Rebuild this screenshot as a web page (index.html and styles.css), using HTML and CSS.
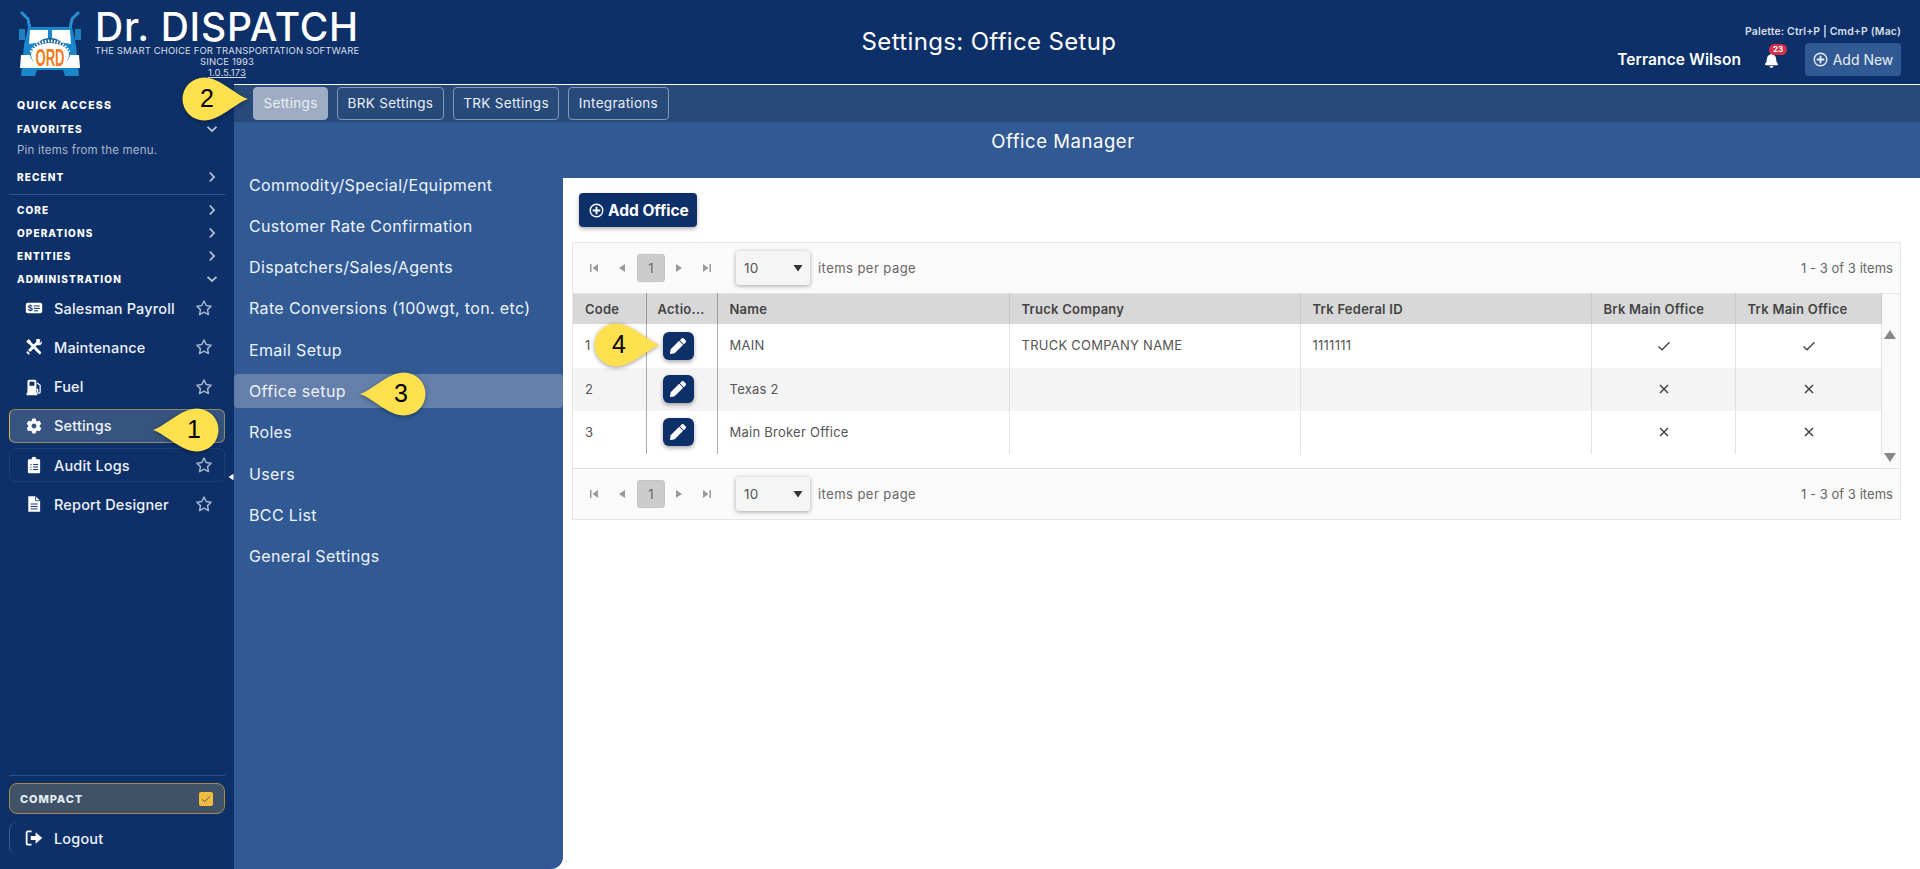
FILE: index.html
```html
<!DOCTYPE html>
<html lang="en">
<head>
<meta charset="utf-8">
<title>Settings: Office Setup</title>
<link rel="stylesheet" href="styles.css">
</head>
<body>
<svg class="defs" aria-hidden="true">
  <symbol id="i-star" viewBox="0 0 24 24"><path d="M12 2.6l2.9 6.1 6.6.9-4.8 4.6 1.2 6.6L12 17.6l-5.9 3.2 1.2-6.6L2.500 9.600l6.600-.9z" fill="none" stroke="currentColor" stroke-width="2" stroke-linejoin="round"/></symbol>
  <symbol id="i-down" viewBox="0 0 12 12"><path d="M1.500 3.800L6 8l4.500-4.200" fill="none" stroke="currentColor" stroke-width="1.800"/></symbol>
  <symbol id="i-right" viewBox="0 0 12 12"><path d="M3.800 1.500L8 6l-4.200 4.500" fill="none" stroke="currentColor" stroke-width="1.800"/></symbol>
  <symbol id="i-plus" viewBox="0 0 16 16"><circle cx="8" cy="8" r="6.700" fill="none" stroke="currentColor" stroke-width="1.500"/><path d="M8 4v8M4 8h8" stroke="currentColor" stroke-width="2"/></symbol>
  <symbol id="i-pen" viewBox="0 0 512 512"><path fill="currentColor" d="M497.900 142.100l-46.100 46.100c-4.700 4.700-12.300 4.700-17 0l-111-111c-4.700-4.700-4.700-12.300 0-17l46.100-46.100c18.700-18.700 49.100-18.700 67.900 0l60.100 60.100c18.800 18.700 18.800 49.100 0 67.900zM284.200 99.800L21.600 362.400.4 483.900c-2.900 16.400 11.400 30.600 27.800 27.800l121.500-21.300 262.600-262.600c4.700-4.700 4.700-12.300 0-17l-111-111c-4.800-4.700-12.400-4.700-17.100 0z"/></symbol>
  <symbol id="i-first" viewBox="0 0 12 12"><path fill="currentColor" d="M2 2h1.500v8H2zM10 2v8L4.500 6z"/></symbol>
  <symbol id="i-prev" viewBox="0 0 12 12"><path fill="currentColor" d="M9 2v8L3 6z"/></symbol>
  <symbol id="i-next" viewBox="0 0 12 12"><path fill="currentColor" d="M3 2v8l6-4z"/></symbol>
  <symbol id="i-last" viewBox="0 0 12 12"><path fill="currentColor" d="M10 2H8.500v8H10zM2 2v8l5.500-4z"/></symbol>
  <symbol id="i-caret" viewBox="0 0 12 12"><path fill="currentColor" d="M1.500 3h9L6 9.500z"/></symbol>
  <symbol id="i-check" viewBox="0 0 14 14"><path d="M1.500 7.500l3.500 3.300 7.500-7.500" fill="none" stroke="currentColor" stroke-width="1.400"/></symbol>
  <symbol id="i-x" viewBox="0 0 14 14"><path d="M3 3l8 8M11 3l-8 8" fill="none" stroke="currentColor" stroke-width="1.500"/></symbol>
  <symbol id="i-callout" viewBox="0 0 68 46"><path d="M1 23C15 18 29 1.500 45 1.500a21.500 21.500 0 0 1 0 43C29 44.500 15 28 1 23z"/></symbol>
</svg>

<div class="app">
  <header class="topbar">
    <div class="brand">
      <svg class="logo" viewBox="0 0 90 76" role="img" aria-label="Dr. Dispatch truck logo">
        <path d="M11 6l7 7 2 10M69 6l-7 7-2 10" fill="none" stroke="#2a8fd0" stroke-width="3"/>
        <rect x="9" y="23" width="6" height="11" fill="#1f7fc0"/><rect x="65" y="23" width="6" height="11" fill="#1f7fc0"/>
        <path d="M18 21h44l4 18 3 31H55l-2-6H27l-2 6H11l3-31z" fill="#1a86cc"/>
        <path d="M20 24h18v11l-19 3zM42 24h18l1 14-19-3z" fill="#fff"/>
        <path d="M19 60c1-20 11-28 21-28s20 8 21 28z" fill="#0f5f9e"/>
        <path d="M21 46c3-7 11-11 19-11s16 4 19 11" fill="none" stroke="#fff" stroke-width="3" stroke-dasharray="1.500 1.500"/>
        <path d="M11 49h9c2 7 5 9 20 9s18-2 20-9h9l1 13H10z" fill="#fff"/>
        <ellipse cx="40" cy="49" rx="19" ry="12" fill="#fff"/>
        <text x="40" y="60" class="logo-ord" text-anchor="middle" textLength="29" lengthAdjust="spacingAndGlyphs">ORD</text>
      </svg>
      <div class="brand-text">
        <div class="brand-name">Dr. DISPATCH</div>
        <div class="brand-line">THE SMART CHOICE FOR TRANSPORTATION SOFTWARE</div>
        <div class="brand-line">SINCE 1993</div>
        <div class="brand-line brand-version">1.0.5.173</div>
      </div>
    </div>
    <h1 class="page-title">Settings: Office Setup</h1>
    <div class="top-right">
      <div class="palette">Palette: Ctrl+P | Cmd+P (Mac)</div>
      <div class="user-row">
        <span class="user-name">Terrance Wilson</span>
        <span class="bell">
          <svg class="bell-icon" viewBox="0 0 448 512"><path fill="currentColor" d="M224 512c35.320 0 63.970-28.650 63.970-64H160.030c0 35.350 28.650 64 63.970 64zm215.390-149.710c-19.320-20.760-55.470-51.990-55.470-154.290 0-77.700-54.480-139.900-127.940-155.160V32c0-17.670-14.320-32-31.980-32s-31.980 14.330-31.980 32v20.840C118.560 68.100 64.080 130.300 64.080 208c0 102.300-36.150 133.530-55.470 154.290-6 6.450-8.660 14.160-8.610 21.710.11 16.400 12.980 32 32.100 32h383.800c19.120 0 32-15.600 32.100-32 .05-7.550-2.610-15.270-8.610-21.710z"/></svg>
          <span class="badge">23</span>
        </span>
        <button class="add-new"><svg class="ic-plus"><use href="#i-plus"/></svg>Add New</button>
      </div>
    </div>
  </header>

  <div class="below">
    <nav class="sidebar">
      <div class="sec sec-first">QUICK ACCESS</div>
      <div class="sec sec-sm">FAVORITES<svg class="chev"><use href="#i-down"/></svg></div>
      <div class="pin-note">Pin items from the menu.</div>
      <div class="sec sec-sm sec-recent">RECENT<svg class="chev"><use href="#i-right"/></svg></div>
      <hr class="rule rule-top">
      <div class="sec sec-sm">CORE<svg class="chev"><use href="#i-right"/></svg></div>
      <div class="sec sec-sm">OPERATIONS<svg class="chev"><use href="#i-right"/></svg></div>
      <div class="sec sec-sm">ENTITIES<svg class="chev"><use href="#i-right"/></svg></div>
      <div class="sec sec-sm">ADMINISTRATION<svg class="chev"><use href="#i-down"/></svg></div>
      <ul class="menu">
        <li class="mi">
          <svg class="mi-ic" viewBox="0 0 22 22"><rect x="1" y="4.500" width="20" height="13" rx="2.500" fill="#fff"/><text x="6.500" y="14.500" class="ic-dollar" text-anchor="middle">$</text><path d="M11 8.500h7M11 11.500h7M11 14.500h5" stroke="#0d3068" stroke-width="1.200"/></svg>
          <span>Salesman Payroll</span><svg class="star"><use href="#i-star"/></svg>
        </li>
        <li class="mi">
          <svg class="mi-ic" viewBox="0 0 22 22"><path d="M4 4l14 14" stroke="#fff" stroke-width="3.500" stroke-linecap="round"/><path d="M17.500 3.500L5 16" stroke="#fff" stroke-width="3.500"/><path d="M3 16l3 3-1.500 1.500-3-3zM13.500 1.500c3-1 5 0 5.500 1l-2.500 2.500 1.500 1.500 2.500-2.500c1 3-1.500 6-5.500 4.500z" fill="#fff"/><path d="M1.500 5l3-3.500 3 2.500-3 3z" fill="#fff"/></svg>
          <span>Maintenance</span><svg class="star"><use href="#i-star"/></svg>
        </li>
        <li class="mi">
          <svg class="mi-ic" viewBox="0 0 22 22"><path d="M3 4a2 2 0 0 1 2-2h7a2 2 0 0 1 2 2v14H3zM2 18h13v3H2z" fill="#fff"/><rect x="5.500" y="4.500" width="6" height="5" fill="#0d3068"/><path d="M15 6l3.500 3v8a1.500 1.500 0 0 1-3 0v-3H14" fill="none" stroke="#fff" stroke-width="1.500"/></svg>
          <span>Fuel</span><svg class="star"><use href="#i-star"/></svg>
        </li>
        <li class="mi mi-active">
          <svg class="mi-ic" viewBox="-40 -40 592 592"><path fill="#fff" d="M487.400 315.700l-42.600-24.600c4.300-23.200 4.300-47 0-70.200l42.600-24.600c4.900-2.800 7.100-8.600 5.500-14-11.100-35.600-30-67.800-54.700-94.600-3.800-4.100-10-5.100-14.800-2.300L380.800 110c-17.900-15.400-38.500-27.300-60.800-35.100V25.800c0-5.600-3.900-10.500-9.400-11.700-36.700-8.200-74.300-7.800-109.200 0-5.500 1.200-9.400 6.100-9.400 11.700V75c-22.200 7.900-42.800 19.800-60.800 35.100L88.700 85.500c-4.900-2.800-11-1.900-14.800 2.300-24.700 26.700-43.600 58.900-54.700 94.600-1.700 5.400.6 11.200 5.500 14L67.300 221c-4.300 23.200-4.300 47 0 70.200l-42.600 24.600c-4.900 2.800-7.100 8.600-5.500 14 11.100 35.600 30 67.800 54.700 94.600 3.800 4.100 10 5.100 14.800 2.300l42.600-24.600c17.900 15.400 38.500 27.300 60.800 35.100v49.200c0 5.600 3.900 10.500 9.400 11.700 36.700 8.200 74.300 7.800 109.200 0 5.500-1.200 9.400-6.100 9.400-11.700v-49.200c22.200-7.900 42.800-19.800 60.800-35.100l42.600 24.600c4.900 2.800 11 1.900 14.800-2.300 24.700-26.700 43.600-58.900 54.700-94.600 1.500-5.500-.7-11.300-5.600-14.100zM256 336c-44.100 0-80-35.900-80-80s35.900-80 80-80 80 35.900 80 80-35.900 80-80 80z"/></svg>
          <span>Settings</span>
        </li>
        <li class="mi mi-hover">
          <svg class="mi-ic" viewBox="0 0 22 22"><path d="M5 4h3a3 3 0 0 1 6 0h3a1.500 1.500 0 0 1 1.500 1.500v14A1.500 1.500 0 0 1 17 21H5a1.500 1.500 0 0 1-1.500-1.500v-14A1.500 1.500 0 0 1 5 4z" fill="#fff"/><path d="M6.500 10.500h1.500M6.500 13.500h1.500M6.500 16.500h1.500M10 10.500h6M10 13.500h6M10 16.500h6" stroke="#0d3068" stroke-width="1.200"/></svg>
          <span>Audit Logs</span><svg class="star"><use href="#i-star"/></svg>
        </li>
        <li class="mi">
          <svg class="mi-ic" viewBox="0 0 22 22"><path d="M4 1.500h9l5.500 5.500v13.500H4z" fill="#fff"/><path d="M7 11h8.500M7 14h8.500M7 17h8.500" stroke="#0d3068" stroke-width="1.200"/><path d="M13 1.500V7h5.500" fill="none" stroke="#0d3068" stroke-width="1"/></svg>
          <span>Report Designer</span><svg class="star"><use href="#i-star"/></svg>
        </li>
      </ul>
      <svg class="collapse"><use href="#i-prev"/></svg>
      <div class="side-bottom">
        <hr class="rule">
        <div class="compact">COMPACT<span class="compact-box"><svg viewBox="0 0 14 14"><use href="#i-check"/></svg></span></div>
        <div class="logout">
          <svg class="mi-ic" viewBox="0 0 22 22"><path d="M8 3H4a2 2 0 0 0-2 2v12a2 2 0 0 0 2 2h4" fill="none" stroke="#fff" stroke-width="2.200"/><path d="M7 8.500h6V4l8 7-8 7v-4.500H7z" fill="#fff"/></svg>
          <span>Logout</span>
        </div>
      </div>
    </nav>

    <main class="main">
      <div class="tabs">
        <span class="tab tab-on">Settings</span>
        <span class="tab">BRK Settings</span>
        <span class="tab">TRK Settings</span>
        <span class="tab">Integrations</span>
      </div>
      <div class="workspace">
        <h2 class="manager-title">Office Manager</h2>
        <ul class="submenu">
          <li>Commodity/Special/Equipment</li>
          <li>Customer Rate Confirmation</li>
          <li>Dispatchers/Sales/Agents</li>
          <li>Rate Conversions (100wgt, ton. etc)</li>
          <li>Email Setup</li>
          <li class="sub-on">Office setup</li>
          <li>Roles</li>
          <li>Users</li>
          <li>BCC List</li>
          <li>General Settings</li>
        </ul>
        <div class="title-fill"></div>
        <section class="content">
          <button class="add-office"><svg class="ic-plus"><use href="#i-plus"/></svg>Add Office</button>
          <div class="grid">
            <div class="pager">
              <svg class="pg"><use href="#i-first"/></svg>
              <svg class="pg"><use href="#i-prev"/></svg>
              <span class="pg-num">1</span>
              <svg class="pg"><use href="#i-next"/></svg>
              <svg class="pg"><use href="#i-last"/></svg>
              <span class="pg-size">10<svg class="caret"><use href="#i-caret"/></svg></span>
              <span class="pg-label">items per page</span>
              <span class="pg-info">1 - 3 of 3 items</span>
            </div>
            <table class="tbl">
              <colgroup><col class="c-code"><col class="c-act"><col class="c-name"><col class="c-co"><col class="c-fed"><col class="c-brk"><col class="c-trk"><col></colgroup>
              <thead>
                <tr><th class="dark">Code</th><th class="dark th-act">Actio...</th><th>Name</th><th>Truck Company</th><th>Trk Federal ID</th><th>Brk Main Office</th><th>Trk Main Office</th><th class="th-end"></th></tr>
              </thead>
              <tbody>
                <tr class="r1"><td class="dark">1</td><td class="dark act"><button class="edit"><svg><use href="#i-pen"/></svg></button></td><td>MAIN</td><td>TRUCK COMPANY NAME</td><td>1111111</td><td class="mid"><svg class="mk"><use href="#i-check"/></svg></td><td class="mid"><svg class="mk"><use href="#i-check"/></svg></td>
                  <td class="scroll" rowspan="4"><div class="scroll-in"><span class="sc-up"></span><span class="sc-down"></span></div></td></tr>
                <tr class="alt"><td class="dark">2</td><td class="dark act"><button class="edit"><svg><use href="#i-pen"/></svg></button></td><td>Texas 2</td><td></td><td></td><td class="mid"><svg class="mk"><use href="#i-x"/></svg></td><td class="mid"><svg class="mk"><use href="#i-x"/></svg></td></tr>
                <tr><td class="dark">3</td><td class="dark act"><button class="edit"><svg><use href="#i-pen"/></svg></button></td><td>Main Broker Office</td><td></td><td></td><td class="mid"><svg class="mk"><use href="#i-x"/></svg></td><td class="mid"><svg class="mk"><use href="#i-x"/></svg></td></tr>
                <tr class="filler"><td colspan="7"></td></tr>
              </tbody>
            </table>
            <div class="pager pager-b">
              <svg class="pg"><use href="#i-first"/></svg>
              <svg class="pg"><use href="#i-prev"/></svg>
              <span class="pg-num">1</span>
              <svg class="pg"><use href="#i-next"/></svg>
              <svg class="pg"><use href="#i-last"/></svg>
              <span class="pg-size">10<svg class="caret"><use href="#i-caret"/></svg></span>
              <span class="pg-label">items per page</span>
              <span class="pg-info">1 - 3 of 3 items</span>
            </div>
          </div>
        </section>
      </div>
    </main>
  </div>

  <div class="callout call-1"><svg><use href="#i-callout"/></svg><span>1</span></div>
  <div class="callout call-2 flip"><svg><use href="#i-callout"/></svg><span>2</span></div>
  <div class="callout call-3"><svg><use href="#i-callout"/></svg><span>3</span></div>
  <div class="callout call-4 flip"><svg><use href="#i-callout"/></svg><span>4</span></div>
</div>
</body>
</html>
```
FILE: styles.css
```css
* { box-sizing: border-box; }
html, body { margin: 0; height: 100%; }
body {
  font-family: Inter, "Open Sans", "Liberation Sans", sans-serif;
  color: #fff;
  background: #fff;
  overflow: hidden;
}
.defs { position: absolute; width: 0; height: 0; }
ul { list-style: none; margin: 0; padding: 0; }
h1, h2 { margin: 0; font-weight: 500; }
button { font: inherit; border: 0; cursor: pointer; }

.app { position: relative; height: 869px; display: flex; flex-direction: column; background: #0d3068; }

/* top bar */
.topbar { height: 84px; flex: none; display: flex; align-items: flex-start; }
.brand { width: 361px; flex: none; display: flex; padding: 6px 0 0 10px; }
.logo { width: 90px; height: 76px; flex: none; }
.logo-ord { font: 700 23px "Liberation Sans", sans-serif; fill: #f07d1e; }
.ic-dollar { font: 700 11px "Liberation Sans", sans-serif; fill: #0d3068; }
.brand-text { display: flex; flex-direction: column; align-items: center; width: 266px; margin-left: -6px; padding-top: 3px; }
.brand-line { font-size: 9.500px; line-height: 11px; color: #d8dfe9; white-space: nowrap; letter-spacing: .12px; }
.brand-name { font-size: 39px; line-height: 36px; font-weight: 500; letter-spacing: .75px; white-space: nowrap; }
.brand-version { text-decoration: underline; }
.page-title { flex: 1; text-align: center; font-size: 24px; line-height: 84px; font-weight: 400; letter-spacing: .35px; }
.top-right { width: 303px; flex: none; padding: 25px 19px 0 0; display: flex; flex-direction: column; align-items: flex-end; }
.palette { font-size: 10.500px; line-height: 13px; font-weight: 600; color: #d7deea; letter-spacing: .13px; white-space: nowrap; }
.user-row { display: flex; align-items: center; margin-top: 5px; height: 33px; }
.user-name { font-size: 15.500px; font-weight: 600; letter-spacing: .1px; white-space: nowrap; }
.bell { position: relative; display: block; width: 15px; height: 18px; margin: 0 25px 0 24px; }
.bell-icon { width: 13px; height: 15px; display: block; margin: 2px 0 0 0; color: #fff; }
.badge { position: absolute; left: 4px; top: -7px; min-width: 18px; height: 11px; border-radius: 6px; background: #d9304a; font-size: 8px; font-weight: 700; line-height: 11px; text-align: center; }
.add-new { width: 96px; height: 33px; border-radius: 4px; background: #315a94; color: #e8edf5; font-size: 14px; display: flex; align-items: center; justify-content: center; gap: 5px; white-space: nowrap; }
.ic-plus { width: 15px; height: 15px; flex: none; }

/* sidebar */
.below { flex: 1; display: flex; min-height: 0; }
.sidebar { position: relative; width: 234px; flex: none; display: flex; flex-direction: column; padding: 0 9px; }
.sec { display: flex; align-items: center; justify-content: space-between; height: 23px; padding: 0 7px 0 8px; font-weight: 800; font-size: 10px; letter-spacing: 1.100px; color: #fff; }
.sec-first { margin-top: 10px; font-size: 10.500px; letter-spacing: 1.250px; }
.sec-recent { margin-top: 4px; }
.chev { width: 12px; height: 12px; color: #b8c3d6; flex: none; }
.pin-note { height: 21px; line-height: 21px; padding-left: 8px; font-size: 11.500px; color: #aab7cd; letter-spacing: .2px; }
.rule { border: 0; border-top: 1px solid #33528a; margin: 0; }
.rule-top { margin: 6px 0 3px; }
.menu { display: flex; flex-direction: column; gap: 5.300px; margin-top: 1px; }
.mi { height: 34px; display: flex; align-items: center; padding: 0 11px 0 13px; border-radius: 6px; font-size: 14.500px; font-weight: 500; color: #eef2f8; letter-spacing: .16px; border: 1px solid transparent; white-space: nowrap; }
.mi > span { flex: 1; }
.mi-ic { width: 18px; height: 18px; flex: none; margin: 0 11px 0 2px; }
.star { width: 18px; height: 18px; color: #a6b4cb; flex: none; }
.mi-active { background: #36547f; border-color: #8c8a6a; border-left: 1.500px solid #e0b04a; }
.mi-hover { border-color: #1a3e75; }
.collapse { position: absolute; left: 226px; top: 388px; width: 10px; height: 10px; color: #fff; }
.side-bottom { margin-top: auto; padding-bottom: 13px; }
.compact { height: 31px; margin-top: 7px; display: flex; align-items: center; justify-content: space-between; padding: 0 11px 0 10px; border: 1px solid #a68c45; border-radius: 8px; background: #3f5268; font-size: 11px; font-weight: 800; letter-spacing: .9px; color: #e6ebf2; }
.compact-box { width: 14px; height: 14px; border-radius: 2px; background: #f2bc3f; color: #3f5268; display: block; }
.compact-box svg { display: block; width: 14px; height: 14px; padding: 2px; }
.logout { height: 32px; margin-top: 8px; margin-bottom: 2px; display: flex; align-items: center; padding-left: 13px; border-left: 1px solid #3a5a8c; border-radius: 8px; font-size: 14.500px; font-weight: 500; color: #eef2f8; letter-spacing: .16px; }

/* main */
.main { flex: 1; min-width: 0; display: flex; flex-direction: column; border-top: 1px solid #fff; }
.tabs { height: 37px; flex: none; background: #274a7a; display: flex; align-items: center; gap: 9px; padding: 0 0 1px 19px; }
.tab { height: 33px; display: flex; align-items: center; padding: 0 9.500px; border: 1px solid #8298b8; border-radius: 4px; font-size: 13.500px; color: #eaeff6; letter-spacing: .3px; white-space: nowrap; }
.tab-on { background: #9eadc4; border-color: #9eadc4; }
.workspace { flex: 1; min-height: 0; display: grid; grid-template-columns: 329px 1fr; grid-template-rows: 38px 18px 1fr; background: #fff; }
.manager-title { grid-column: 1 / -1; background: #315a94; text-align: center; font-size: 18.500px; line-height: 38px; font-weight: 400; padding-right: 28px; letter-spacing: .55px; }
.submenu { grid-column: 1; grid-row: 2 / 4; background: #315a94; border-bottom-right-radius: 12px; padding-top: 7.500px; display: flex; flex-direction: column; gap: 7.300px; }
.submenu li { height: 34px; line-height: 34px; padding-left: 15px; font-size: 16px; color: #eef2f8; letter-spacing: .36px; white-space: nowrap; border-radius: 4px; }
.submenu .sub-on { background: #6480aa; }
.title-fill { grid-column: 2; grid-row: 2; background: #315a94; }
.content { grid-column: 2; grid-row: 3; padding: 15px 19px 0 9px; min-width: 0; color: #555; }
.add-office { display: flex; align-items: center; gap: 4px; height: 34px; padding: 0 8px 0 10px; margin-left: 7px; background: #0d3068; color: #fff; border-radius: 4px; font-size: 15.500px; font-weight: 700; box-shadow: 0 2px 4px rgba(0,0,0,.3); white-space: nowrap; }

/* grid */
.grid { margin-top: 15px; border: 1px solid #e6e6e6; font-size: 13px; letter-spacing: .25px; }
.pager { height: 50px; display: flex; align-items: center; background: #fafafa; padding: 0 7px 0 15px; color: #666; white-space: nowrap; }
.pager-b { height: 51px; border-top: 1px solid #e2e2e2; }
.pg { width: 12px; height: 12px; color: #999; margin-right: 16px; flex: none; }
.pg-num { width: 28px; height: 28px; margin: 0 8px 0 -7px; background: #ccc; border: 1px solid #c4c4c4; border-radius: 3px; display: flex; align-items: center; justify-content: center; color: #666; }
.pg-size { width: 74px; height: 34px; margin: 0 8px 0 7px; background: #f5f5f5; border-radius: 3px; box-shadow: 0 1px 4px rgba(0,0,0,.35); display: flex; align-items: center; justify-content: space-between; padding: 0 6px 0 8px; color: #555; font-size: 13.500px; }
.pg-label { letter-spacing: .45px; }
.caret { width: 12px; height: 12px; color: #333; }
.pg-info { margin-left: auto; letter-spacing: .05px; }
.tbl { width: 100%; table-layout: fixed; border-collapse: collapse; }
.c-code { width: 73px; }
.c-act { width: 71px; }
.c-name { width: 292px; }
.c-co { width: 291px; }
.c-fed { width: 291px; }
.c-brk { width: 144px; }
.c-trk { width: 146px; }
.tbl th { height: 30px; padding: 0 0 0 12px; background: #d8d8d8; color: #444; font-weight: 600; text-align: left; border-right: 1px solid #c8c8c8; border-top: 1px solid #e6e6e6; white-space: nowrap; overflow: hidden; }
.tbl th.dark { border-right-color: #999; }
.tbl .th-act { padding-left: 11px; }
.tbl .th-end { background: #fafafa; border-right: 0; }
.tbl td { height: 43px; padding: 0 0 1px 12px; border-right: 1px solid #e2e2e2; color: #555; white-space: nowrap; }
.tbl td.dark { border-right-color: #aaa; }
.tbl .r1 td { height: 44px; }
.tbl .alt td { background: #f4f4f4; }
.tbl td.act { padding: 0 0 0 16px; }
.tbl td.mid { padding: 0 0 0 2px; text-align: center; }
.mk { width: 14px; height: 14px; color: #444; display: block; margin: 0 auto; }
.edit { width: 31px; height: 28px; padding: 0; border-radius: 6px; background: #0d3068; color: #fff; box-shadow: 0 2px 4px rgba(0,0,0,.35); display: block; }
.edit svg { display: block; width: 16px; height: 16px; margin: 6px auto; }
.tbl .filler td { height: 14px; border: 0; }
.tbl td.scroll { padding: 0; background: #fafafa; border: 0; vertical-align: top; }
.scroll-in { height: 144px; display: flex; flex-direction: column; justify-content: space-between; align-items: center; padding: 6px 2px 6px 0; }
.sc-up, .sc-down { width: 0; height: 0; border-left: 6.500px solid transparent; border-right: 6.500px solid transparent; }
.sc-up { border-bottom: 9px solid #888; }
.sc-down { border-top: 9px solid #888; }

/* numbered callouts */
.callout { position: absolute; width: 68px; height: 46px; }
.callout svg { display: block; width: 68px; height: 46px; fill: #ffe04f; filter: drop-shadow(0 1px 2px rgba(0,0,0,.4)); overflow: visible; }
.callout span { position: absolute; top: 0; right: 4px; width: 44px; text-align: center; font: 400 25px/44px "Liberation Sans", sans-serif; color: #000; }
.flip svg { transform: scaleX(-1); }
.flip span { left: 4px; right: auto; }
.call-1 { left: 152px; top: 407px; }
.call-2 { left: 181px; top: 76px; }
.call-3 { left: 359px; top: 371px; }
.call-4 { left: 593px; top: 322px; }
```
